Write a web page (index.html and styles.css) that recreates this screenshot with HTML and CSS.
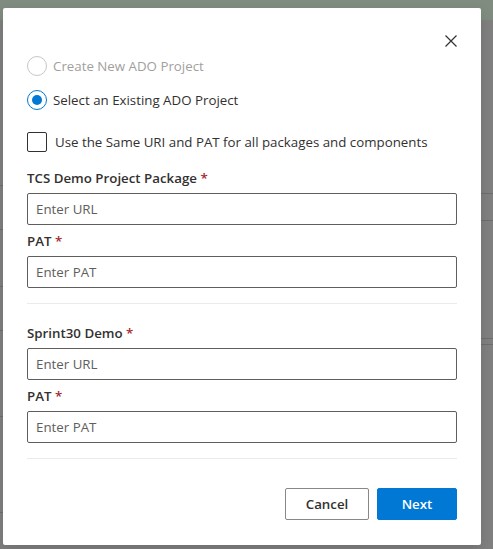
FILE: index.html
```html
<!DOCTYPE html>
<html>
<head>
<meta charset="utf-8">
<link rel="stylesheet" href="styles.css">
</head>
<body>
<div class="backdrop">
  <div class="bg-lines left">
    <span style="top:185px"></span><span style="top:229px"></span><span style="top:286px"></span><span style="top:330px"></span><span style="top:416px"></span><span style="top:512px"></span>
  </div>
  <div class="bg-lines right">
    <span style="top:193px"></span><span style="top:220px"></span><span style="top:338px"></span><span style="top:344px"></span>
  </div>
  <div class="dialog">
    <div class="header">
      <button class="close" aria-label="Close">
        <svg width="12" height="12" viewBox="0 0 12 12"><path d="M0.5 0.5 L11.5 11.5 M11.5 0.5 L0.5 11.5" stroke="#323130" stroke-width="1.2" fill="none"/></svg>
      </button>
    </div>
    <div class="radios">
      <label class="radio disabled"><span class="circle"></span><span>Create New ADO Project</span></label>
      <label class="radio checked"><span class="circle"><span class="dot"></span></span><span>Select an Existing ADO Project</span></label>
    </div>
    <label class="check"><span class="box"></span><span>Use the Same URI and PAT for all packages and components</span></label>
    <div class="group">
      <div class="label">TCS Demo Project Package <span class="req">*</span></div>
      <div class="input">Enter URL</div>
      <div class="label">PAT <span class="req">*</span></div>
      <div class="input">Enter PAT</div>
    </div>
    <div class="sep"></div>
    <div class="group second">
      <div class="label">Sprint30 Demo <span class="req">*</span></div>
      <div class="input">Enter URL</div>
      <div class="label">PAT <span class="req">*</span></div>
      <div class="input">Enter PAT</div>
    </div>
    <div class="sep"></div>
    <div class="footer">
      <button class="btn secondary">Cancel</button>
      <button class="btn primary">Next</button>
    </div>
  </div>
</div>
</body>
</html>
```
FILE: styles.css
```css
* { box-sizing: border-box; }
html, body { margin: 0; padding: 0; }
body {
  width: 493px;
  height: 549px;
  overflow: hidden;
  font-family: "Open Sans", "Noto Sans", sans-serif;
  background: linear-gradient(#7f8c7f 0, #7f8c7f 20px, #808080 20px, #808080 100%);
}
.backdrop {
  position: relative;
  width: 493px;
  height: 549px;
  padding: 8px 0 0 3px;
}
.bg-lines span {
  position: absolute;
  height: 1px;
  background: #6e6e6e;
}
.bg-lines.left span { left: 0; width: 3px; }
.bg-lines.right span { left: 481px; width: 12px; }
.dialog {
  position: relative;
  width: 478px;
  height: 537px;
  background: #fff;
  border-radius: 2px;
  padding: 0 24px;
  box-shadow: 0 6px 14px rgba(0,0,0,0.13);
  color: #323130;
  font-size: 13.3px;
}
.header {
  display: flex;
  justify-content: flex-end;
  padding-top: 27px;
  height: 48px;
}
.close {
  width: 12px;
  height: 12px;
  padding: 0;
  border: 0;
  background: none;
  display: block;
}
.close svg { display: block; }
.radios {
  display: flex;
  flex-direction: column;
  gap: 14px;
}
.radio {
  display: flex;
  align-items: center;
  gap: 6px;
  height: 20px;
  line-height: 20px;
}
.circle {
  width: 20px;
  height: 20px;
  border-radius: 50%;
  border: 1px solid #323130;
  display: flex;
  align-items: center;
  justify-content: center;
}
.radio.disabled { color: #a19f9d; }
.radio.disabled .circle { border-color: #c8c6c4; }
.radio.checked .circle { border-color: #0078d4; }
.dot {
  width: 10px;
  height: 10px;
  border-radius: 50%;
  background: #0078d4;
}
.check {
  display: flex;
  align-items: center;
  gap: 8px;
  margin-top: 22px;
  height: 20px;
  line-height: 20px;
}
.box {
  width: 20px;
  height: 20px;
  border: 1px solid #323130;
  border-radius: 2px;
}
.group { margin-top: 16px; }
.group.second { margin-top: 19px; }
.label {
  font-weight: 600;
  line-height: 20px;
  margin-bottom: 5px;
}
.input + .label { margin-top: 6px; }
.req { color: #a4262c; }
.input {
  height: 32px;
  border: 1px solid #605e5c;
  border-radius: 2px;
  padding: 0 8px;
  line-height: 30px;
  color: #605e5c;
}
.sep {
  height: 1px;
  background: #edebe9;
  margin-top: 15px;
}
.footer {
  display: flex;
  justify-content: flex-end;
  gap: 8px;
  margin-top: 29px;
}
.btn {
  height: 32px;
  font-family: inherit;
  font-size: 13.3px;
  font-weight: 600;
  border-radius: 2px;
  padding: 0 16px;
}
.btn.secondary {
  width: 84px;
  background: #fff;
  border: 1px solid #8a8886;
  color: #323130;
}
.btn.primary {
  width: 80px;
  background: #0078d4;
  border: 1px solid #0078d4;
  color: #fff;
}
```
